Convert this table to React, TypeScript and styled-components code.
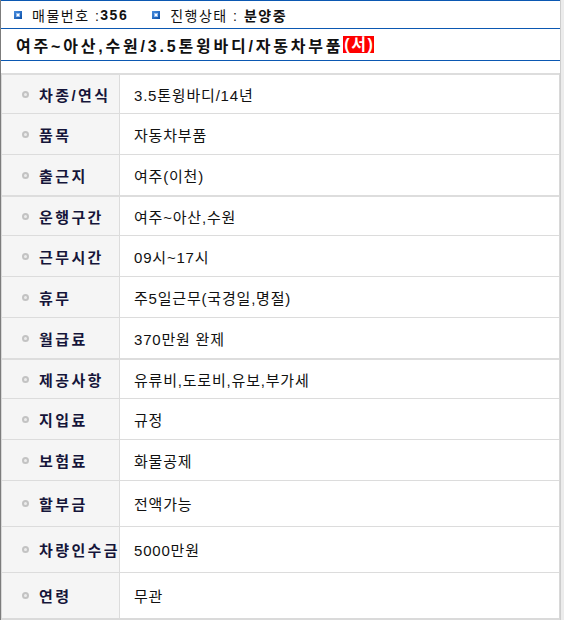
import styled, { createGlobalStyle } from 'styled-components';

type Item = { label: string; value: string };

const groups: Item[][] = [
  [
    { label: '차종/연식', value: '3.5톤윙바디/14년' },
    { label: '품목', value: '자동차부품' },
    { label: '출근지', value: '여주(이천)' },
  ],
  [
    { label: '운행구간', value: '여주~아산,수원' },
    { label: '근무시간', value: '09시~17시' },
    { label: '휴무', value: '주5일근무(국경일,명절)' },
    { label: '월급료', value: '370만원 완제' },
  ],
  [
    { label: '제공사항', value: '유류비,도로비,유보,부가세' },
    { label: '지입료', value: '규정' },
    { label: '보험료', value: '화물공제' },
  ],
];

const extra: Item[] = [
  { label: '할부금', value: '전액가능' },
  { label: '차량인수금', value: '5000만원' },
  { label: '연령', value: '무관' },
];

export default function App() {
  return (
    <>
      <GlobalStyle />
      <Frame>
        <Content>
          <InfoBar>
            <InfoItem>
              <BlueIcon />
              매물번호 :<b>356</b>
            </InfoItem>
            <InfoItem>
              <BlueIcon />
              진행상태 : <b>분양중</b>
            </InfoItem>
          </InfoBar>

          <TitleBar>
            여주~아산,수원/3.5톤윙바디/자동차부품<RedTag>(서)</RedTag>
          </TitleBar>

          <Table>
            {groups.map((group, gi) => (
              <Group key={gi}>
                {group.map((item, i) => (
                  <Row key={item.label} $first={i === 0} $height={i === 0 ? 38 : 40}>
                    <Label>
                      <Bullet />
                      {item.label}
                    </Label>
                    <Value>{item.value}</Value>
                  </Row>
                ))}
                {gi === groups.length - 1 &&
                  extra.map((item) => (
                    <Row key={item.label} $height={45}>
                      <Label>
                        <Bullet />
                        {item.label}
                      </Label>
                      <Value>{item.value}</Value>
                    </Row>
                  ))}
              </Group>
            ))}
          </Table>
        </Content>
      </Frame>
    </>
  );
}

const GlobalStyle = createGlobalStyle`
  body {
    margin: 0;
    background: #ffffff;
    font-family: "Liberation Sans", "Noto Sans CJK KR", sans-serif;
    color: #111;
  }
`;

const Frame = styled.div`
  display: flex;
  width: 563px;
  border-left: 1px solid #7c7c7c;
  background: #ececec;
`;

const Content = styled.div`
  width: 559px;
  background: #fff;
  border-right: 1px solid #cdcdcd;
`;

const InfoBar = styled.div`
  display: flex;
  align-items: center;
  gap: 24px;
  height: 27px;
  padding-left: 13px;
  border-top: 1px solid #0b58b2;
  border-bottom: 1px solid #0b58b2;
  font-size: 14px;
  letter-spacing: 1.5px;
  color: #111;

  b {
    font-weight: 700;
  }
`;

const InfoItem = styled.span`
  display: flex;
  align-items: center;
  white-space: pre;
`;

const BlueIcon = styled.span`
  position: relative;
  width: 8px;
  height: 8px;
  margin-right: 10px;
  background: linear-gradient(135deg, #4a8fe0, #0a4ea6);

  &::after {
    content: '';
    position: absolute;
    left: 3px;
    top: 3px;
    width: 2px;
    height: 2px;
    background: #fff;
    box-shadow: 0 0 0 1px #8fbaf0;
  }
`;

const TitleBar = styled.div`
  display: flex;
  align-items: center;
  height: 31px;
  padding-left: 15px;
  border-bottom: 1px solid #0b58b2;
  font-size: 16px;
  font-weight: 700;
  letter-spacing: 2.8px;
  color: #111;
  white-space: pre;
`;

const RedTag = styled.span`
  display: inline-block;
  background: #ff0000;
  color: #fff;
  line-height: 17px;
  letter-spacing: 1.5px;
  padding: 0 0 0 1px;
`;

const Table = styled.div`
  margin-top: 12px;
  border-left: 1px solid #d8d8d8;
  border-right: 1px solid #d8d8d8;
  border-bottom: 2px solid #dadada;
`;

const Group = styled.div`
  border-top: 2px solid #dddddd;
`;

const Row = styled.div<{ $first?: boolean; $height: number }>`
  display: grid;
  grid-template-columns: 118px 1fr;
  height: ${(p) => p.$height}px;
  border-top: ${(p) => (p.$first ? 'none' : '1px solid #dcdcdc')};
`;

const Label = styled.div`
  display: flex;
  align-items: center;
  padding-left: 20px;
  background: #f5f5f5;
  border-right: 1px solid #dcdcdc;
  font-size: 15px;
  font-weight: 700;
  letter-spacing: 2.4px;
  color: #15153a;
  white-space: nowrap;
`;

const Bullet = styled.span`
  width: 3px;
  height: 3px;
  margin-right: 10px;
  border-radius: 50%;
  border: 2px solid #c3c3c3;
  background: #ececec;
  flex-shrink: 0;
`;

const Value = styled.div`
  display: flex;
  align-items: center;
  padding-left: 14px;
  font-size: 15px;
  letter-spacing: 0.8px;
  color: #111;
  white-space: nowrap;
`;
